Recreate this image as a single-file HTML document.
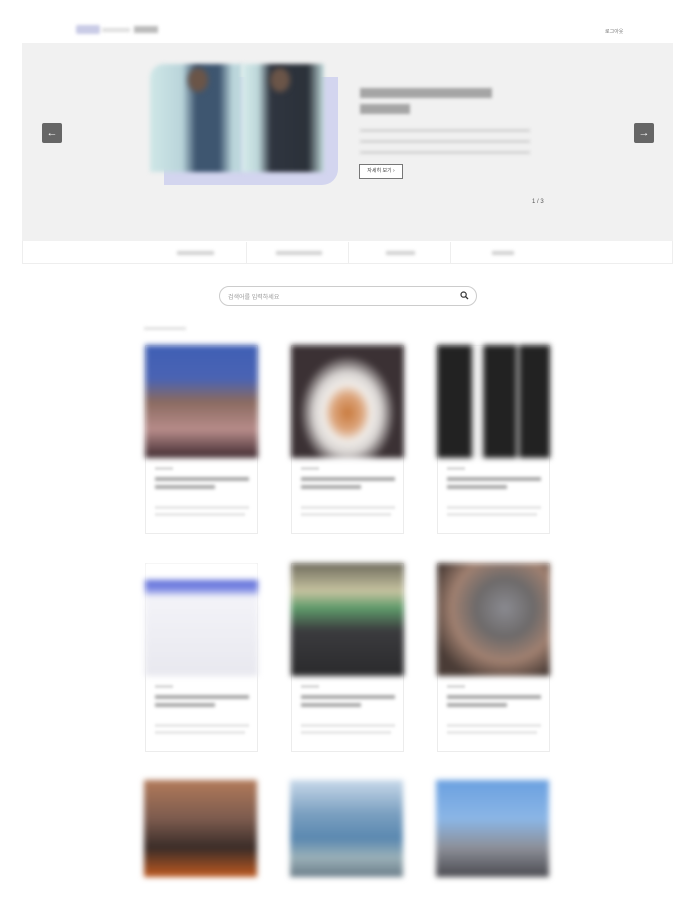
<!DOCTYPE html>
<html><head><meta charset="utf-8"><style>
*{margin:0;padding:0;box-sizing:border-box}
html,body{width:693px;height:897px;overflow:hidden}
body{background:#fff;position:relative;font-family:"Liberation Sans","Noto Sans CJK KR",sans-serif;color:#333}
.a{position:absolute}
.bl{filter:blur(1.5px)}
.card{position:absolute;width:113px;height:189px;border:1px solid #ececec;background:#fff}
.card .img{position:absolute;left:-1px;top:-1px;width:113px;height:113px;filter:blur(3px)}
.card .c1{position:absolute;left:9px;top:121px;width:18px;height:3px;background:#d8d8d8;filter:blur(1.2px)}
.card .t{position:absolute;left:9px;top:131px;width:94px;height:4px;background:#aaa;filter:blur(1.5px)}
.card .t2{position:absolute;left:9px;top:139px;width:60px;height:4px;background:#aaa;filter:blur(1.5px)}
.card .d{position:absolute;left:9px;top:160px;width:94px;height:3px;background:#e6e6e6;filter:blur(1.2px)}
.card .d2{position:absolute;left:9px;top:167px;width:90px;height:3px;background:#e6e6e6;filter:blur(1.2px)}
.arr{position:absolute;top:123px;width:20px;height:20px;background:#666;color:#fff;font-size:11px;text-align:center;line-height:20px;border-radius:2px}
</style></head><body>
<div class="a bl" style="left:76px;top:25px;width:24px;height:9px;background:#c9cbe6;border-radius:2px"></div>
<div class="a bl" style="left:102px;top:28px;width:28px;height:4px;background:#ddd"></div>
<div class="a bl" style="left:134px;top:26px;width:24px;height:7px;background:#bbb"></div>
<div class="a" style="left:605px;top:28px;font-size:5px;color:#777">로그아웃</div>

<div class="a" style="left:22px;top:43px;width:651px;height:198px;background:#f1f1f1"></div>
<div class="arr" style="left:42px">←</div>
<div class="arr" style="left:634px">→</div>
<div class="a" style="left:164px;top:77px;width:174px;height:108px;background:#d3d5ef;border-radius:0 0 16px 0"></div>
<div class="a" style="left:150px;top:64px;width:92px;height:108px;border-radius:14px 0 0 0;background:linear-gradient(90deg,#cfe7e7,#b9d4da 35%,#3e5670 50%,#3e5670 75%,#bcd7dc 90%);filter:blur(2px)"></div>
<div class="a" style="left:242px;top:64px;width:82px;height:108px;background:linear-gradient(90deg,#d6eceb,#bcd6d9 20%,#2f3540 35%,#2b3139 80%,#c6dfe0);filter:blur(2px)"></div>
<div class="a" style="left:188px;top:68px;width:20px;height:24px;border-radius:50%;background:#6b5548;filter:blur(3px)"></div>
<div class="a" style="left:270px;top:68px;width:20px;height:24px;border-radius:50%;background:#6b5548;filter:blur(3px)"></div>
<div class="a bl" style="left:360px;top:88px;width:132px;height:10px;background:#a5a5a5"></div>
<div class="a bl" style="left:360px;top:104px;width:50px;height:10px;background:#a5a5a5"></div>
<div class="a bl" style="left:360px;top:129px;width:170px;height:3px;background:#d4d4d4"></div>
<div class="a bl" style="left:360px;top:140px;width:170px;height:3px;background:#d4d4d4"></div>
<div class="a bl" style="left:360px;top:151px;width:170px;height:3px;background:#d4d4d4"></div>
<div class="a" style="left:359px;top:164px;width:44px;height:15px;border:1px solid #777;background:#fff;font-size:5px;line-height:13px;text-align:center;color:#444">자세히 보기 ›</div>
<div class="a" style="left:532px;top:199px;font-size:6px;color:#555">1 / 3</div>

<div class="a" style="left:22px;top:241px;width:651px;height:23px;border:1px solid #eee;border-top:none"></div>
<div class="a" style="left:246px;top:242px;width:1px;height:21px;background:#eee"></div>
<div class="a" style="left:348px;top:242px;width:1px;height:21px;background:#eee"></div>
<div class="a" style="left:450px;top:242px;width:1px;height:21px;background:#eee"></div>
<div class="a bl" style="left:177px;top:251px;width:37px;height:4px;background:#d0d0d0"></div>
<div class="a bl" style="left:276px;top:251px;width:46px;height:4px;background:#d0d0d0"></div>
<div class="a bl" style="left:386px;top:251px;width:29px;height:4px;background:#d0d0d0"></div>
<div class="a bl" style="left:492px;top:251px;width:22px;height:4px;background:#d0d0d0"></div>

<div class="a" style="left:219px;top:286px;width:258px;height:20px;border:1px solid #ccc;border-radius:10px"></div>
<div class="a" style="left:228px;top:292px;font-size:6px;color:#999">검색어를 입력하세요</div>
<svg class="a" style="left:460px;top:291px" width="9" height="9" viewBox="0 0 9 9"><circle cx="3.6" cy="3.6" r="2.6" fill="none" stroke="#333" stroke-width="1.2"/><path d="M5.6 5.6L8 8" stroke="#333" stroke-width="1.3"/></svg>
<div class="a bl" style="left:144px;top:327px;width:42px;height:3px;background:#e0e0e0"></div>

<div class="card" style="left:145px;top:345px"><div class="img" style="background:linear-gradient(180deg,#3f5fb5,#4a63b3 30%,#8a6a60 50%,#b78c8a 75%,#402a30)"></div><div class="c1"></div><div class="t"></div><div class="t2"></div><div class="d"></div><div class="d2"></div></div>
<div class="card" style="left:291px;top:345px"><div class="img" style="background:radial-gradient(ellipse at 50% 60%,#c87a3d 0,#dca47b 18%,#f0ece8 30%,#d8d4d2 42%,#3b3134 60%)"></div><div class="c1"></div><div class="t"></div><div class="t2"></div><div class="d"></div><div class="d2"></div></div>
<div class="card" style="left:437px;top:345px"><div class="img" style="background:linear-gradient(90deg,#222 0,#222 30%,#f2f2f2 32%,#f2f2f2 40%,#222 42%,#222 70%,#f2f2f2 71%,#222 74%,#222 100%)"></div><div class="c1"></div><div class="t"></div><div class="t2"></div><div class="d"></div><div class="d2"></div></div>

<div class="card" style="left:145px;top:563px"><div class="img" style="background:linear-gradient(180deg,#fff 0,#fff 14%,#5b6bd8 16%,#8893e6 24%,#f3f3f8 30%,#e8e8ef 100%)"></div><div class="c1"></div><div class="t"></div><div class="t2"></div><div class="d"></div><div class="d2"></div></div>
<div class="card" style="left:291px;top:563px"><div class="img" style="background:linear-gradient(180deg,#6e6a5c,#c6c3a0 25%,#5e9a6a 40%,#3b3b3e 60%,#2a2a2c)"></div><div class="c1"></div><div class="t"></div><div class="t2"></div><div class="d"></div><div class="d2"></div></div>
<div class="card" style="left:437px;top:563px"><div class="img" style="background:radial-gradient(ellipse at 60% 40%,#8a8a90 0,#6d6a6a 30%,#a08070 55%,#4a3c36 80%)"></div><div class="c1"></div><div class="t"></div><div class="t2"></div><div class="d"></div><div class="d2"></div></div>

<div class="card" style="left:145px;top:781px;height:97px;border:none"><div class="img" style="height:97px;background:linear-gradient(180deg,#b27a5a,#7c5b4e 40%,#3a2c28 70%,#c05a20)"></div></div>
<div class="card" style="left:291px;top:781px;height:97px;border:none"><div class="img" style="height:97px;background:linear-gradient(180deg,#c8d9ea,#7a9fc0 35%,#5a88b0 60%,#9ab0b8 80%,#6a7c88)"></div></div>
<div class="card" style="left:437px;top:781px;height:97px;border:none"><div class="img" style="height:97px;background:linear-gradient(180deg,#6aa0e0,#8bb6e6 40%,#8c8f98 70%,#4a4a50)"></div></div>
</body></html>
